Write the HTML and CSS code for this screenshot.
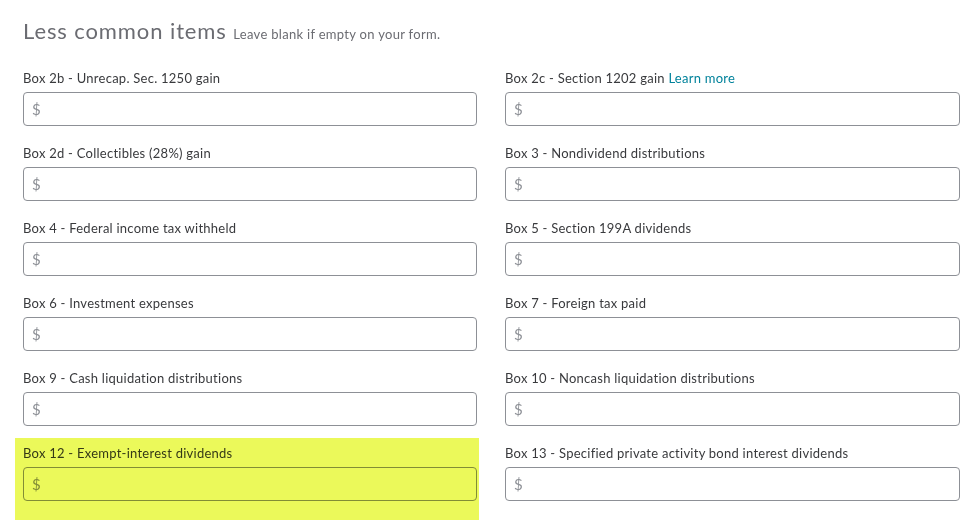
FILE: index.html
```html
<!DOCTYPE html>
<html>
<head>
<meta charset="utf-8">
<link rel="stylesheet" href="styles.css">
</head>
<body>
<div class="page">
  <h2 class="title">Less common items <span class="sub">Leave blank if empty on your form.</span></h2>
  <div class="grid">
    <div class="field"><label>Box 2b - Unrecap. Sec. 1250 gain</label><div class="input"><span class="cur">$</span></div></div>
    <div class="field"><label>Box 2c - Section 1202 gain <a class="link">Learn more</a></label><div class="input"><span class="cur">$</span></div></div>
    <div class="field"><label>Box 2d - Collectibles (28%) gain</label><div class="input"><span class="cur">$</span></div></div>
    <div class="field"><label>Box 3 - Nondividend distributions</label><div class="input"><span class="cur">$</span></div></div>
    <div class="field"><label>Box 4 - Federal income tax withheld</label><div class="input"><span class="cur">$</span></div></div>
    <div class="field"><label>Box 5 - Section 199A dividends</label><div class="input"><span class="cur">$</span></div></div>
    <div class="field"><label>Box 6 - Investment expenses</label><div class="input"><span class="cur">$</span></div></div>
    <div class="field"><label>Box 7 - Foreign tax paid</label><div class="input"><span class="cur">$</span></div></div>
    <div class="field"><label>Box 9 - Cash liquidation distributions</label><div class="input"><span class="cur">$</span></div></div>
    <div class="field"><label>Box 10 - Noncash liquidation distributions</label><div class="input"><span class="cur">$</span></div></div>
    <div class="field hl"><label>Box 12 - Exempt-interest dividends</label><div class="input"><span class="cur">$</span></div><div class="marker"></div></div>
    <div class="field"><label>Box 13 - Specified private activity bond interest dividends</label><div class="input"><span class="cur">$</span></div></div>
  </div>
</div>
</body>
</html>
```
FILE: styles.css
```css
html, body { margin: 0; padding: 0; background: #fff; }
body { font-family: Lato, "Open Sans", sans-serif; overflow: hidden; height: 520px; }
.page { padding: 16px 12px 0 23px; }
.title { margin: 0; font-weight: 400; font-size: 22px; line-height: 30px; color: #6b6c72; letter-spacing: 0.9px; }
.sub { font-size: 13px; color: #6b6c72; letter-spacing: 0.3px; }
.grid { display: grid; grid-template-columns: 454px 455px; column-gap: 28px; row-gap: 18px; margin-top: 20px; }
.field { display: flex; flex-direction: column; position: relative; }
.field label { font-size: 13px; line-height: 18px; color: #393a3d; margin-bottom: 5px; white-space: nowrap; letter-spacing: 0.25px; }
.link { color: #00829b; }
.input { height: 34px; box-sizing: border-box; border: 1px solid #8d9096; border-radius: 4px; display: flex; align-items: center; padding-left: 8px; background: #fff; }
.cur { color: #8d9096; font-size: 15px; }
.marker { position: absolute; left: -8px; right: -2px; top: -6px; height: 82px; background: #ebf95a; mix-blend-mode: multiply; pointer-events: none; }
```
